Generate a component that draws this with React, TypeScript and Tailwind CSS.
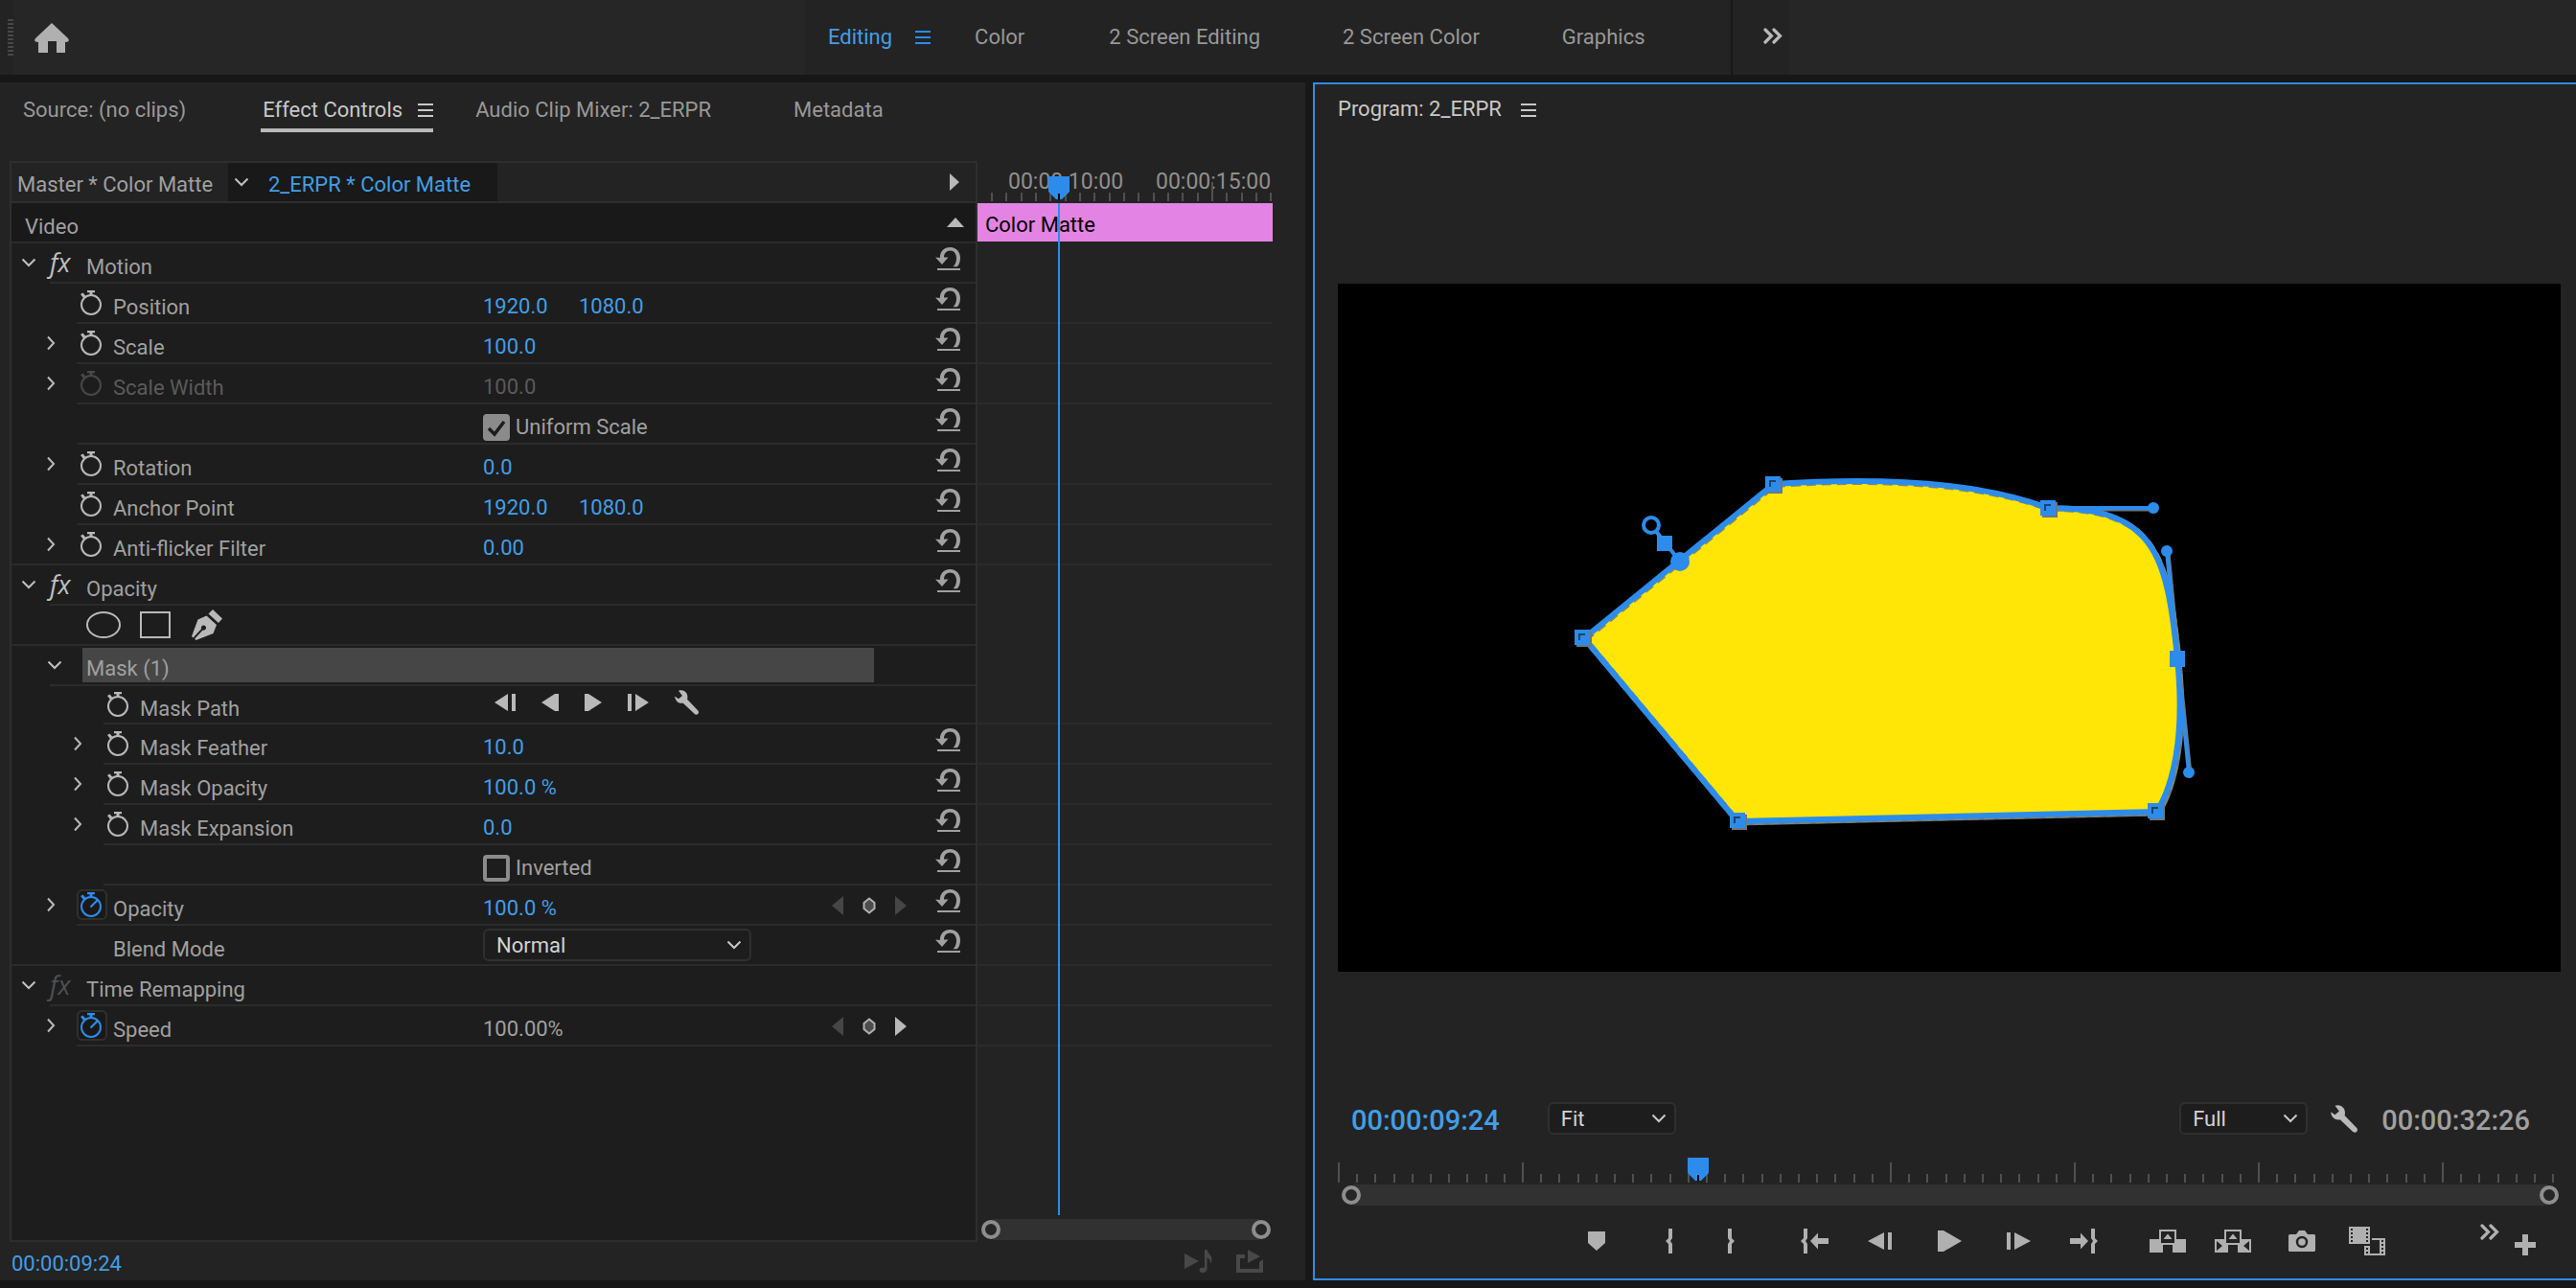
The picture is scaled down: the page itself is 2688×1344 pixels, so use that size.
import type { ReactNode } from "react";

type Row = {
  kind: "group" | "param" | "shapes" | "mask";
  label?: string;
  level?: 1 | 2;
  toggle?: boolean;
  watch?: "off" | "on" | "disabled";
  values?: string[];
  check?: { label: string; on: boolean };
  extra?: "tracking" | "blend";
  keys?: "none" | "next";
  plain?: boolean;
  disabled?: boolean;
  reset?: boolean;
  indent: string;
  lane?: boolean;
  height?: string;
};

const ROWS: Row[] = [
  { kind: "group", label: "Motion", reset: true, indent: "ml-10" },
  { kind: "param", label: "Position", level: 1, watch: "off", values: ["1920.0", "1080.0"], reset: true, indent: "ml-17", lane: true },
  { kind: "param", label: "Scale", level: 1, toggle: true, watch: "off", values: ["100.0"], reset: true, indent: "ml-17", lane: true },
  { kind: "param", label: "Scale Width", level: 1, toggle: true, watch: "disabled", values: ["100.0"], disabled: true, reset: true, indent: "ml-17", lane: true },
  { kind: "param", level: 1, check: { label: "Uniform Scale", on: true }, reset: true, indent: "ml-17" },
  { kind: "param", label: "Rotation", level: 1, toggle: true, watch: "off", values: ["0.0"], reset: true, indent: "ml-17", lane: true },
  { kind: "param", label: "Anchor Point", level: 1, watch: "off", values: ["1920.0", "1080.0"], reset: true, indent: "ml-17", lane: true },
  { kind: "param", label: "Anti-flicker Filter", level: 1, toggle: true, watch: "off", values: ["0.00"], reset: true, indent: "ml-0", lane: true },
  { kind: "group", label: "Opacity", reset: true, indent: "ml-10" },
  { kind: "shapes", indent: "ml-0" },
  { kind: "mask", label: "Mask (1)", indent: "ml-10" },
  { kind: "param", label: "Mask Path", level: 2, watch: "off", extra: "tracking", indent: "ml-24", lane: true, height: "h-[38px]" },
  { kind: "param", label: "Mask Feather", level: 2, toggle: true, watch: "off", values: ["10.0"], reset: true, indent: "ml-24", lane: true },
  { kind: "param", label: "Mask Opacity", level: 2, toggle: true, watch: "off", values: ["100.0 %"], reset: true, indent: "ml-24", lane: true },
  { kind: "param", label: "Mask Expansion", level: 2, toggle: true, watch: "off", values: ["0.0"], reset: true, indent: "ml-24", lane: true },
  { kind: "param", level: 2, check: { label: "Inverted", on: false }, reset: true, indent: "ml-24", lane: true },
  { kind: "param", label: "Opacity", level: 1, toggle: true, watch: "on", values: ["100.0 %"], keys: "none", reset: true, indent: "ml-17", lane: true },
  { kind: "param", label: "Blend Mode", level: 1, extra: "blend", reset: true, indent: "ml-0", lane: true },
  { kind: "group", label: "Time Remapping", disabled: true, indent: "ml-10", lane: true },
  { kind: "param", label: "Speed", level: 1, toggle: true, watch: "on", values: ["100.00%"], plain: true, keys: "next", indent: "ml-17", lane: true },
];

function Svg({ w, h, children, className = "" }: { w: number; h: number; children: ReactNode; className?: string }) {
  return (
    <svg width={w} height={h} viewBox={`0 0 ${w} ${h}`} fill="currentColor" className={`shrink-0 ${className}`} aria-hidden="true">
      {children}
    </svg>
  );
}

function ChevronDown({ className = "" }: { className?: string }) {
  return (
    <Svg w={16} h={10} className={className}>
      <path d="M1.5 1.5 8 8l6.500-6.500" fill="none" stroke="currentColor" strokeWidth="2" />
    </Svg>
  );
}

function ChevronRight() {
  return (
    <Svg w={10} h={16}>
      <path d="M2 1.500 8 8l-6 6.500" fill="none" stroke="currentColor" strokeWidth="2" />
    </Svg>
  );
}

function MenuIcon({ className = "" }: { className?: string }) {
  return (
    <Svg w={16} h={14} className={className}>
      <path d="M0 0h16v2H0zM0 6h16v2H0zM0 12h16v2H0z" />
    </Svg>
  );
}

function MoreIcon() {
  return (
    <Svg w={20} h={17}>
      <path d="M2 2l6.500 6.500L2 15M11 2l6.500 6.500L11 15" fill="none" stroke="currentColor" strokeWidth="3.200" strokeLinecap="round" />
    </Svg>
  );
}

function ResetIcon() {
  return (
    <Svg w={26} h={24}>
      <path d="M4.800 11C4.800 4.500 9 0 15.500 0 22 0 26 5 26 11c0 4-1 7-3.200 9.300h-4.300C21 18 22 15 22 11.500 22 7 19.500 3.600 15.500 3.600 11.500 3.600 9 6.500 9 10.500h4.500L7 18 0 10.500z" />
      <path d="M2 22h24v2H2z" />
    </Svg>
  );
}

function StopwatchIcon({ running }: { running?: boolean }) {
  return (
    <Svg w={24} h={26}>
      <circle cx="11" cy="15" r="10" fill="none" stroke="currentColor" strokeWidth="2" />
      <path d="M7 0h8v2.200h-2.500V5h-3V2.200H7zM0 4l2.500-1.500L5.500 6 3 8z" />
      {running && <path d="M10.500 15.500 18 8" fill="none" stroke="currentColor" strokeWidth="2.200" />}
    </Svg>
  );
}

function WrenchIcon({ size = 29 }: { size?: number }) {
  return (
    <svg width={size} height={size} viewBox="0 0 29 29" fill="currentColor" className="shrink-0" aria-hidden="true">
      <path d="M4.500.7C8-.6 12 .5 14 4c1.200 2.400 1.200 5 .6 7l12.600 13c2.400 3-1.400 6.400-4 4L9.800 15.200C6 16.200 1 14 0 7.200l4.500 3 4.400-3.600z" />
    </svg>
  );
}

function RingHandle({ label }: { label: string }) {
  return <button type="button" aria-label={label} className="z-10 size-5 shrink-0 rounded-full border-4 border-[#8e8e8e] bg-[#262626]" />;
}

function PlayheadIcon({ w, h }: { w: number; h: number }) {
  return (
    <svg width={w} height={h} viewBox="0 0 22 24" preserveAspectRatio="none" aria-hidden="true" className="block">
      <path d="M0 0h22v16l-8 8H8l-8-8z" fill="#2d8ceb" />
      <path d="M10 18h2v6h-2z" fill="#000" />
    </svg>
  );
}

function Dropdown({ id, label, value, options, className }: { id: string; label: string; value: string; options: string[]; className: string }) {
  return (
    <div className={`relative h-[34px] ${className}`}>
      <select
        id={id}
        aria-label={label}
        defaultValue={value}
        className="h-full w-full appearance-none rounded-md border-2 border-[#303030] bg-[#1d1d1d] pt-0.5 pr-8 pl-3 text-[22px] leading-7 text-[#d2d2d2]"
      >
        {options.map((o) => (
          <option key={o}>{o}</option>
        ))}
      </select>
      <ChevronDown className="pointer-events-none absolute top-3 right-2.5 text-[#c8c8c8]" />
    </div>
  );
}

function KeyframeNav({ next }: { next: boolean }) {
  return (
    <div className="flex items-center pt-0.5">
      <button type="button" aria-label="Previous keyframe" className="text-[#464646]">
        <Svg w={12} h={20}><path d="M12 0v20L0 10z" /></Svg>
      </button>
      <button type="button" aria-label="Add or remove keyframe" className="mx-5">
        <Svg w={14} h={18}>
          <path d="M7 1.500 12.500 6v6L7 16.500 1.500 12V6z" fill="#4d4d4d" stroke="#b0b0b0" strokeWidth="2" />
        </Svg>
      </button>
      <button type="button" aria-label="Next keyframe" className={next ? "text-[#b9b9b9]" : "text-[#464646]"}>
        <Svg w={12} h={20}><path d="M0 0v20l12-10z" /></Svg>
      </button>
    </div>
  );
}

function TrackingButtons() {
  return (
    <div className="flex items-center gap-[27px] pb-1 pl-3 text-[#b9b9b9]">
      <button type="button" aria-label="Track backward one frame">
        <Svg w={22} h={18}><path d="M14 0v18L0 9zM18 0h4v18h-4z" /></Svg>
      </button>
      <button type="button" aria-label="Track backward">
        <Svg w={18} h={18}><path d="M18 0v18h-4L0 9l14-9z" /></Svg>
      </button>
      <button type="button" aria-label="Track forward">
        <Svg w={18} h={18}><path d="M0 0v18h4l14-9L4 0z" /></Svg>
      </button>
      <button type="button" aria-label="Track forward one frame">
        <Svg w={22} h={18}><path d="M8 0v18l14-9zM0 0h4v18H0z" /></Svg>
      </button>
      <button type="button" aria-label="Tracking method">
        <WrenchIcon size={26} />
      </button>
    </div>
  );
}

function ShapeTools() {
  return (
    <div className="flex items-center gap-5 pl-[78px] text-[#b9b9b9]">
      <button type="button" aria-label="Create ellipse mask">
        <Svg w={36} h={28}><ellipse cx="18" cy="14" rx="17" ry="13" fill="none" stroke="currentColor" strokeWidth="2" /></Svg>
      </button>
      <button type="button" aria-label="Create 4-point polygon mask">
        <Svg w={32} h={28}><path d="M1 1h30v26H1z" fill="none" stroke="currentColor" strokeWidth="2" /></Svg>
      </button>
      <button type="button" aria-label="Free draw bezier" className="pl-0.5">
        <Svg w={32} h={32}>
          <path d="M22 0 32 9.500 28 14 17.500 4.500z" />
          <path d="M15.500 6.500 26 16l-3.500 9L4.500 32 3.200 30.600 11.500 21.500a2.600 2.600 0 1 0-1.400-1.300L1.600 29.400 0 28 6.500 10.500z" />
        </Svg>
      </button>
    </div>
  );
}

function RowLabel({ row }: { row: Row }) {
  if (row.kind === "group") {
    return (
      <div className="flex w-[492px] items-center pl-2.5">
        <button type="button" aria-label={`Collapse ${row.label}`} className="w-[30px] text-[#c0c0c0]"><ChevronDown /></button>
        <button type="button" aria-label={`Toggle ${row.label}`} className={`w-[38px] text-left font-['Open_Sans'] text-[27px] leading-8 italic ${row.disabled ? "text-[#505050]" : "text-[#c0c0c0]"}`}>
          fx
        </button>
        <span className="pt-2.5">{row.label}</span>
      </div>
    );
  }
  return (
    <div className={`flex w-[492px] items-center ${row.level === 2 ? "pl-16" : "pl-9"}`}>
      <div className="flex w-8 items-center">
        {row.toggle && <button type="button" aria-label={`Expand ${row.label}`} className="text-[#b9b9b9]"><ChevronRight /></button>}
      </div>
      <div className="flex w-8 items-center justify-center">
        {row.watch === "on" && (
          <button type="button" aria-label="Toggle animation" className="flex size-8 items-center justify-center rounded-md border-2 border-[#303030] bg-[#191919] text-[#2d8ceb]">
            <StopwatchIcon running />
          </button>
        )}
        {(row.watch === "off" || row.watch === "disabled") && (
          <button type="button" aria-label="Toggle animation" className={row.watch === "off" ? "text-[#b9b9b9]" : "text-[#484848]"}>
            <StopwatchIcon />
          </button>
        )}
      </div>
      {row.extra === "blend" ? (
        <label htmlFor="blend-mode" className="pt-2.5 pl-1.5">{row.label}</label>
      ) : (
        <span className={`pt-2.5 pl-1.5 ${row.disabled ? "text-[#5a5a5a]" : ""}`}>{row.label}</span>
      )}
    </div>
  );
}

function EffectRow({ row }: { row: Row }) {
  const valueColor = row.disabled ? "text-[#5a5a5a]" : row.plain ? "text-[#a0a0a0]" : "text-[#439ee6]";
  return (
    <li>
      <div className={`flex items-center pr-4 ${row.height ?? "h-10"}`}>
        {row.kind === "shapes" && <ShapeTools />}
        {row.kind === "mask" && (
          <>
            <button type="button" aria-label="Collapse mask" className="pl-[37px] text-[#c0c0c0]"><ChevronDown /></button>
            <div className="ml-[21px] flex h-9 flex-1 items-center bg-[#464646] pl-1">
              <span className="pt-2">{row.label}</span>
            </div>
            <div className="w-[90px]" />
          </>
        )}
        {(row.kind === "group" || row.kind === "param") && <RowLabel row={row} />}
        {row.values && (
          <div className={`flex pt-2 ${valueColor}`}>
            {row.values.map((v, i) => (
              <button key={i} type="button" className="w-[100px] text-left whitespace-nowrap">{v}</button>
            ))}
          </div>
        )}
        {row.check && (
          <label className="flex items-center gap-1.5 pt-2">
            <span className="relative flex size-7">
              <input
                type="checkbox"
                defaultChecked={row.check.on}
                className="peer size-7 appearance-none rounded-sm border-4 border-[#8b8b8b] checked:bg-[#8b8b8b]"
              />
              <Svg w={28} h={28} className="pointer-events-none absolute inset-0 hidden text-[#1d1d1d] peer-checked:block">
                <path d="M6 15l6 6L22 8" fill="none" stroke="currentColor" strokeWidth="3.500" />
              </Svg>
            </span>
            {row.check.label}
          </label>
        )}
        {row.extra === "tracking" && <TrackingButtons />}
        {row.extra === "blend" && (
          <Dropdown id="blend-mode" label="Blend Mode" value="Normal" options={["Normal", "Multiply", "Screen", "Overlay"]} className="w-[280px]" />
        )}
        {(row.keys || row.reset) && (
          <div className="ml-auto flex items-center">
            {row.keys && <KeyframeNav next={row.keys === "next"} />}
            {row.reset ? (
              <button type="button" aria-label="Reset parameter" className="ml-[30px] pb-2"><ResetIcon /></button>
            ) : (
              <div className="w-14" />
            )}
          </div>
        )}
      </div>
      <div className={`h-0.5 bg-[#2b2b2b] ${row.indent}`} />
    </li>
  );
}

function EffectTimeline() {
  return (
    <div className="relative flex w-[308px] shrink-0 flex-col">
      <div className="relative flex h-11 pl-8 text-[23px] text-[#8f8f8f]">
        <span className="flex w-[154px] shrink-0 items-center">00:00:10:00</span>
        <span className="flex shrink-0 items-center">00:00:15:00</span>
        <svg width="308" height="24" className="absolute bottom-0 left-0" shapeRendering="crispEdges" aria-hidden="true">
          {Array.from({ length: 20 }, (_, i) => (
            <rect key={i} x={14 + Math.round(i * 15.34)} y={i === 15 ? 2 : 13} width="2" height={i === 15 ? 20 : 9} fill="#505050" />
          ))}
        </svg>
      </div>
      <div className="flex h-10 items-center bg-[#e383e3] pt-1.5 pl-2 text-[22px] text-black">Color Matte</div>
      <div className="mt-0.5">
        {ROWS.map((row, i) => (
          <div key={i}>
            <div className={row.height ?? "h-10"} />
            <div className={`h-0.5 ${row.lane ? "bg-[#2a2a2a]" : ""}`} />
          </div>
        ))}
      </div>
      <div className="mt-auto mb-0.5 flex h-[22px] items-center justify-between pr-0.5 pl-1">
        <RingHandle label="Zoom timeline start" />
        <div className="-mx-2 h-full flex-1 bg-[#313131]" />
        <RingHandle label="Zoom timeline end" />
      </div>
      <div className="absolute top-4 left-[74px]"><PlayheadIcon w={22} h={24} /></div>
      <div className="absolute top-11 bottom-7 left-[84px] w-0.5 bg-[#2d8ceb]" />
    </div>
  );
}

function EffectControls() {
  return (
    <section className="flex flex-col bg-[#232323]" aria-label="Effect Controls">
      <nav className="flex h-[82px] items-start pl-6 text-[#989898]">
        <button type="button" className="h-13 pt-1.5">Source: (no clips)</button>
        <div className="ml-[78px] flex h-13 items-center border-b-4 border-[#b9b9b9] pt-2.5 pl-0.5 text-[#c8c8c8]">
          <button type="button">Effect Controls</button>
          <button type="button" aria-label="Panel menu" className="ml-4"><MenuIcon /></button>
        </div>
        <button type="button" className="ml-11 h-13 pt-1.5">Audio Clip Mixer: 2_ERPR</button>
        <button type="button" className="ml-[86px] h-13 pt-1.5">Metadata</button>
      </nav>
      <div className="flex flex-1 pr-[34px] pl-2.5">
        <div className="flex-1 border-2 border-[#2e2e2e] bg-[#1d1d1d]">
          <div className="flex h-10 items-center bg-[#232323]">
            <button type="button" className="h-full w-[226px] pt-1.5 pl-1.5 text-left">Master * Color Matte</button>
            <div className="flex h-full items-center bg-[#191919] pr-7 pl-1.5 text-[#439ee6]">
              <button type="button" aria-label="Choose clip" className="mr-5 text-[#c0c0c0]"><ChevronDown /></button>
              <button type="button" className="pt-1.5">2_ERPR * Color Matte</button>
            </div>
            <button type="button" aria-label="Show timeline" className="mr-4 ml-auto text-[#b9b9b9]"><Svg w={12} h={18}><path d="M1 0v18L11 9z" /></Svg></button>
          </div>
          <div className="h-0.5 bg-[#2e2e2e]" />
          <div className="flex h-10 items-center justify-between bg-[#191919] pr-3 pl-3.5">
            <span className="pt-2.5">Video</span>
            <button type="button" aria-label="Collapse video effects" className="text-[#b9b9b9]"><Svg w={18} h={10}><path d="M0 10h18L9 0z" /></Svg></button>
          </div>
          <div className="h-0.5 bg-[#2b2b2b]" />
          <ul className="[&_button]:shrink-0">
            {ROWS.map((row, i) => (
              <EffectRow key={i} row={row} />
            ))}
          </ul>
        </div>
        <EffectTimeline />
      </div>
      <footer className="flex h-10 items-center gap-6 pr-11 pl-3">
        <button type="button" className="pt-1.5 text-[#439ee6]">00:00:09:24</button>
        <button type="button" aria-label="Play only audio for this clip" className="ml-auto text-[#484848]">
          <Svg w={30} h={24}>
            <path d="M0 4v16l15-8z" />
            <path d="M21 0h2.500c.5 4 5 5 5 10 0 2-.6 3.500-1.500 5 .3-4-1.500-6-3.500-6.500V20c0 2.500-2 4-4.500 4s-3.500-1.200-3.500-2.700S17 18.500 19 18.500l2 .2z" />
          </Svg>
        </button>
        <button type="button" aria-label="Export" className="text-[#484848]">
          <Svg w={28} h={24}>
            <path d="M0 5h9v4H4v11h20v-7l4-3v14H0z" />
            <path d="M12 0v14l13-7z" />
          </Svg>
        </button>
      </footer>
    </section>
  );
}

const MASK_PATH = "M257 370 455 209C560 202 665 206 741 234C851 234 865 279 876 391C888 510 854 551 854 551L417 561Z";

function MaskCanvas() {
  const corners = [[454, 209], [741, 234], [853, 550], [417, 560], [255, 369]];
  return (
    <svg viewBox="0 0 1276 718" className="block w-full bg-black" role="img" aria-label="Program monitor">
      <path d={MASK_PATH} fill="#ffe607" stroke="#70757c" strokeWidth="5" strokeLinejoin="round" transform="translate(2 2)" />
      <path d={MASK_PATH} fill="#ffe607" />
      <g fill="none" stroke="#70757c" strokeWidth="3" transform="translate(2 2)">
        <path d="M741 234h110M865 279l11 112 12 119M327 252l30 38" />
      </g>
      <path d={MASK_PATH} fill="none" stroke="#8a8a5a" strokeWidth="6" strokeDasharray="10 6" transform="translate(1 1)" />
      <path d={MASK_PATH} fill="none" stroke="#2d8ceb" strokeWidth="6" strokeLinejoin="round" />
      <g fill="none" stroke="#2d8ceb" strokeWidth="4">
        <path d="M741 234h110M865 279l11 112 12 119M327 252l30 38" />
      </g>
      {corners.map(([x, y]) => (
        <g key={x}>
          <rect x={x - 6} y={y - 6} width="16" height="16" fill="#70757c" />
          <rect x={x - 8} y={y - 8} width="16" height="16" fill="#2d8ceb" />
          <path d={`M${x - 3} ${y + 3}v-6h6`} fill="none" stroke="#1c4468" strokeWidth="2" />
        </g>
      ))}
      <g fill="#2d8ceb">
        <rect x="868" y="383" width="16" height="17" />
        <rect x="333" y="263" width="16" height="16" />
        <circle cx="357" cy="290" r="10" />
        <circle cx="851" cy="234" r="6" />
        <circle cx="865" cy="279" r="6" />
        <circle cx="888" cy="510" r="6" />
      </g>
      <circle cx="327" cy="252" r="8" fill="#000" stroke="#2d8ceb" strokeWidth="4" />
    </svg>
  );
}

const BRACE = "M3 0h4v10l-2 3 2 3v10H3V16l-3-3 3-3z";

const TRANSPORT: { label: string; space: string; icon: ReactNode }[] = [
  { label: "Add Marker", space: "ml-0", icon: <Svg w={18} h={20}><path d="M0 0h18v12l-9 8-9-8z" /></Svg> },
  { label: "Mark In", space: "ml-9", icon: <Svg w={8} h={26}><path d={BRACE} /></Svg> },
  { label: "Mark Out", space: "ml-6", icon: <Svg w={8} h={26}><path d={BRACE} transform="translate(8 0) scale(-1 1)" /></Svg> },
  { label: "Go to In", space: "ml-12", icon: <Svg w={30} h={26}><path d={BRACE} /><path d="m10 13 8-8.500V10h11v6H18v5.500z" /></Svg> },
  { label: "Step Back", space: "ml-7", icon: <Svg w={26} h={18}><path d="M17 0v18L0 9zM21 0h4v18h-4z" /></Svg> },
  { label: "Play", space: "ml-8", icon: <Svg w={25} h={22}><path d="M0 0h6l19 11L6 22H0z" /></Svg> },
  { label: "Step Forward", space: "ml-8", icon: <Svg w={26} h={18}><path d="M9 0v18l17-9zM1 0h4v18H1z" /></Svg> },
  { label: "Go to Out", space: "ml-7", icon: <Svg w={30} h={26}><g transform="translate(30 0) scale(-1 1)"><path d={BRACE} /><path d="m10 13 8-8.500V10h11v6H18v5.500z" /></g></Svg> },
  {
    label: "Lift", space: "ml-12",
    icon: (
      <Svg w={38} h={24}>
        <path d="M0 10h10V0h18v10h10v14H24v-8H14v8H0z" />
        <path d="M12 2h14v12H12z" fill="#232323" />
        <path d="M14.500 10h9L19 4.500z" />
      </Svg>
    ),
  },
  {
    label: "Extract", space: "ml-7",
    icon: (
      <Svg w={38} h={24}>
        <path d="M0 10h10V0h18v10h10v14H24v-8H14v8H0z" />
        <path d="M12 2h14v12H12zM2 12v10l6-5zM36 12v10l-6-5z" fill="#232323" />
        <path d="M14.500 10h9L19 4.500z" />
      </Svg>
    ),
  },
  {
    label: "Export Frame", space: "ml-8",
    icon: (
      <Svg w={28} h={22}>
        <path d="M1 4h7l3-4h6l3 4h7l1 1v16l-1 1H1l-1-1V5z" />
        <circle cx="14" cy="12" r="5" fill="none" stroke="#232323" strokeWidth="2.500" />
      </Svg>
    ),
  },
  {
    label: "Comparison View", space: "ml-7",
    icon: (
      <Svg w={38} h={30}>
        <path d="M0 0h22v18H0z" />
        <path d="M3 2v14M19 2v14" stroke="#232323" strokeWidth="2" strokeDasharray="2 2" />
        <path d="M24 12h14v18H16V20h6v8h10V14h-8z" />
        <path d="M35 14v14M19 22v6" stroke="#232323" strokeWidth="2" strokeDasharray="2 2" />
      </Svg>
    ),
  },
];

function ProgramMonitor() {
  return (
    <section className="flex flex-col border-y-2 border-l-2 border-[#2d8ceb] bg-[#232323] pr-4 pl-6" aria-label="Program">
      <div className="flex h-[72px] items-start gap-5 text-[#c8c8c8]">
        <h2 className="h-13 pt-3">Program: 2_ERPR</h2>
        <button type="button" aria-label="Panel menu" className="pt-5"><MenuIcon /></button>
      </div>
      <div className="flex flex-1 items-center">
        <MaskCanvas />
      </div>
      <div className="flex h-[34px] items-center pr-8 pl-3.5">
        <button type="button" className="pt-1 text-[29px] font-medium text-[#439ee6]">00:00:09:24</button>
        <Dropdown id="zoom-level" label="Zoom level" value="Fit" options={["Fit", "50%", "100%"]} className="ml-[50px] w-[134px]" />
        <Dropdown id="resolution" label="Playback resolution" value="Full" options={["Full", "1/2", "1/4"]} className="ml-auto w-[134px]" />
        <button type="button" aria-label="Settings" className="mx-6 text-[#b9b9b9]"><WrenchIcon /></button>
        <span className="pt-1 text-[29px] font-medium text-[#a0a0a0]">00:00:32:26</span>
      </div>
      <div className="relative mt-6 h-[26px]">
        <svg width="100%" height="26" shapeRendering="crispEdges" aria-hidden="true">
          {Array.from({ length: 67 }, (_, i) => (
            <rect key={i} x={`${(i * 19.2) / 12.76}%`} y={i % 10 === 0 ? 5 : 17} width="2" height={i % 10 === 0 ? 21 : 9} fill="#505050" />
          ))}
        </svg>
        <div className="absolute top-0 left-[29.5%] -translate-x-1/2"><PlayheadIcon w={22} h={24} /></div>
      </div>
      <div className="mt-0.5 flex h-[22px] items-center pr-0.5 pl-1">
        <RingHandle label="Zoom start" />
        <div className="-mx-2 h-full flex-1 bg-[#313131]" />
        <RingHandle label="Zoom end" />
      </div>
      <div className="flex h-[76px] items-center justify-end pb-0.5 text-[#b0b0b0]">
        {TRANSPORT.map((t) => (
          <button key={t.label} type="button" aria-label={t.label} className={`flex w-10 justify-center ${t.space}`}>
            {t.icon}
          </button>
        ))}
        <div className="ml-[98px] flex items-center gap-4 pr-[26px]">
          <button type="button" aria-label="More buttons" className="pb-5"><MoreIcon /></button>
          <button type="button" aria-label="Button editor" className="pt-2">
            <Svg w={22} h={22}><path d="M8 0h6v8h8v6h-8v8H8v-8H0V8h8z" /></Svg>
          </button>
        </div>
      </div>
    </section>
  );
}

function WorkspaceBar() {
  return (
    <header className="flex h-[78px] text-[#989898]">
      <div className="flex w-[840px] items-center bg-[#262626]">
        <div className="flex h-full w-3.5 items-center justify-end bg-[#232323]">
          <Svg w={6} h={38} className="text-[#484848]"><path d="M3 0v38" stroke="currentColor" strokeWidth="6" strokeDasharray="2 2" /></Svg>
        </div>
        <button type="button" aria-label="Home" className="ml-[22px] text-[#b0b0b0]">
          <Svg w={36} h={31}><path d="M18 0 35 16c2 3 0 4-3 4v11H23V19h-9v12H4V20c-3 0-5-1-3-4z" /></Svg>
        </button>
      </div>
      <nav className="flex w-[966px] items-center bg-[#232323] pl-6">
        <button type="button" className="text-[#439ee6]">Editing</button>
        <button type="button" aria-label="Workspace menu" className="ml-6 text-[#2d8ceb]"><MenuIcon /></button>
        <button type="button" className="ml-[46px]">Color</button>
        <button type="button" className="ml-[88px]">2 Screen Editing</button>
        <button type="button" className="ml-[86px]">2 Screen Color</button>
        <button type="button" className="ml-[86px]">Graphics</button>
      </nav>
      <div className="flex w-[62px] items-center justify-end border-l-2 border-[#171717] bg-[#232323] pr-2 pb-1 text-[#b9b9b9]">
        <button type="button" aria-label="More workspaces"><MoreIcon /></button>
      </div>
      <div className="flex-1 bg-[#262626]" />
    </header>
  );
}

export default function App() {
  return (
    <div className="flex min-h-screen flex-col bg-[#171717] font-[Roboto,'Noto_Sans',sans-serif] text-[22px] leading-7 text-[#a0a0a0]">
      <WorkspaceBar />
      <main className="grid flex-1 grid-cols-[1362fr_8px_1318fr] py-2">
        <EffectControls />
        <div />
        <ProgramMonitor />
      </main>
    </div>
  );
}
